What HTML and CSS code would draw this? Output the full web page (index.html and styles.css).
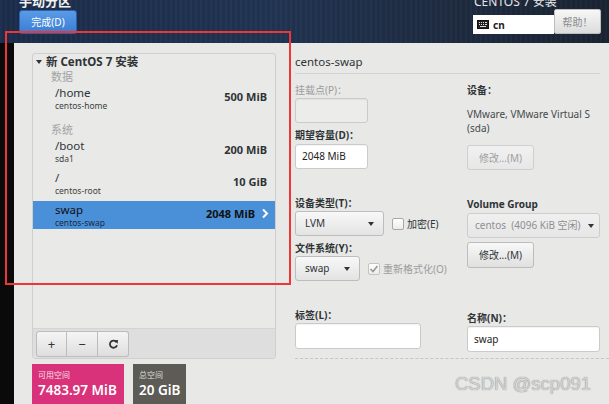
FILE: index.html
```html
<!DOCTYPE html>
<html lang="zh-CN">
<head>
    <meta charset="UTF-8">
    <title>手动分区 - CentOS 7 安装</title>
    <link rel="stylesheet" href="styles.css">
</head>
<body>
<div class="screen">
    <header class="topbar">
        <div class="top-left">
            <h1>手动分区</h1>
            <button class="done-btn">完成(D)</button>
        </div>
        <div class="top-right">
            <div class="product">CENTOS 7 安装</div>
            <div class="top-tools">
                <div class="kbd-field">
                    <svg width="12" height="9" viewBox="0 0 12 9">
                        <rect x="0.5" y="0.5" width="11" height="8" fill="#222" stroke="#111"/>
                        <path d="M2 2.5h1M4 2.5h1M6 2.5h1M8 2.5h2M2 4.5h1M4 4.5h1M6 4.5h1M8 4.5h2M3 6.5h6" stroke="#ddd" stroke-width="1"/>
                    </svg>
                    <span>cn</span>
                </div>
                <button class="help-btn">帮助！</button>
            </div>
        </div>
    </header>

    <div class="main">
        <div class="edge"></div>

        <!-- mount point list -->
        <section class="left-pane">
            <div class="tree-box">
                <div class="tree">
                    <div class="tree-title"><span class="expander"></span>新 CentOS 7 安装</div>
                    <div class="group first">数据</div>
                    <div class="row">
                        <div class="row-text">
                            <div class="mount">/home</div>
                            <div class="device">centos-home</div>
                        </div>
                        <div class="size">500 MiB</div>
                    </div>
                    <div class="group">系统</div>
                    <div class="row">
                        <div class="row-text">
                            <div class="mount">/boot</div>
                            <div class="device">sda1</div>
                        </div>
                        <div class="size">200 MiB</div>
                    </div>
                    <div class="row">
                        <div class="row-text">
                            <div class="mount">/</div>
                            <div class="device">centos-root</div>
                        </div>
                        <div class="size">10 GiB</div>
                    </div>
                    <div class="row selected">
                        <div class="row-text">
                            <div class="mount">swap</div>
                            <div class="device">centos-swap</div>
                        </div>
                        <div class="size">2048 MiB</div>
                        <svg class="chevron" width="8" height="11" viewBox="0 0 8 11">
                            <polyline points="2,1.5 6,5.5 2,9.5" fill="none" stroke="#fff" stroke-width="2"/>
                        </svg>
                    </div>
                </div>
                <div class="toolbar">
                    <button class="tool-btn">+</button>
                    <button class="tool-btn">&minus;</button>
                    <button class="tool-btn">
                        <svg width="11" height="11" viewBox="0 0 11 11">
                            <path d="M8.6 3.2A3.6 3.6 0 1 0 9 6.2" fill="none" stroke="#333" stroke-width="1.8"/>
                            <polygon points="6.2,1.2 10,1 9.6,4.8" fill="#333"/>
                        </svg>
                    </button>
                </div>
            </div>
            <div class="stats">
                <div class="stat free">
                    <div class="stat-label">可用空间</div>
                    <div class="stat-value">7483.97 MiB</div>
                </div>
                <div class="stat total">
                    <div class="stat-label">总空间</div>
                    <div class="stat-value">20 GiB</div>
                </div>
            </div>
        </section>

        <!-- selected device details -->
        <section class="right-pane">
            <div class="detail-title">centos-swap</div>
            <div class="detail-cols">
                <div class="col col-left">
                    <div class="label disabled mt-first">挂载点(P)：</div>
                    <div class="entry disabled w73"></div>
                    <div class="label mt-5">期望容量(D)：</div>
                    <div class="entry w73 mt-2">2048 MiB</div>
                    <div class="label mt-28">设备类型(T)：</div>
                    <div class="inline">
                        <div class="combo w89">LVM<span class="arrow"></span></div>
                        <label class="check"><span class="box"></span>加密(E)</label>
                    </div>
                    <div class="label mt-6">文件系统(Y)：</div>
                    <div class="inline">
                        <div class="combo w65">swap<span class="arrow"></span></div>
                        <label class="check disabled"><span class="box checked">
                            <svg width="10" height="10" viewBox="0 0 10 10"><polyline points="1.5,5 4,7.5 8.5,2" fill="none" stroke="#999" stroke-width="1.6"/></svg>
                        </span>重新格式化(O)</label>
                    </div>
                    <div class="label mt-28">标签(L)：</div>
                    <div class="entry w126 tall"></div>
                </div>
                <div class="col col-right">
                    <div class="label mt-first">设备：</div>
                    <div class="device-desc">VMware, VMware Virtual S<br>(sda)</div>
                    <button class="btn disabled mt-10">修改...(M)</button>
                    <div class="label mt-27">Volume Group</div>
                    <div class="combo disabled full mt-2">centos&nbsp;&nbsp;(4096 KiB 空闲)<span class="arrow"></span></div>
                    <button class="btn tall mt-4">修改...(M)</button>
                    <div class="label mt-44">名称(N)：</div>
                    <div class="entry full tall">swap</div>
                </div>
            </div>
            <div class="dashed"></div>
        </section>
    </div>

    <div class="annotation"></div>
    <div class="watermark">CSDN @scp091</div>
</div>
</body>
</html>
```

FILE: styles.css
```css
* {
    margin: 0;
    padding: 0;
    box-sizing: border-box;
}

body {
    font-family: 'Noto Sans', 'Noto Sans CJK SC', sans-serif;
    background-color: #e8e8e7;
    color: #2e3436;
}

.screen {
    position: relative;
    width: 609px;
    height: 404px;
    overflow: hidden;
}

button {
    font-family: inherit;
}

/* top bar */
.topbar {
    height: 43px;
    display: flex;
    justify-content: space-between;
    background:
        repeating-linear-gradient(90deg, rgba(255,255,255,0.02) 0 2px, rgba(0,0,0,0.03) 2px 5px),
        linear-gradient(90deg, #1b2d4c 0%, #213452 45%, #1e2b40 75%, #1a2433 100%);
    color: #fff;
}

.top-left {
    padding-left: 19px;
}

.top-left h1 {
    margin-top: -7px;
    font-size: 13px;
    line-height: 16px;
    font-weight: bold;
    color: #f2f2f2;
}

.done-btn {
    width: 58px;
    height: 24px;
    border: 1px solid #2a63ad;
    border-radius: 3px;
    background: linear-gradient(#5a9be6, #3a7ed3);
    color: #fff;
    font-size: 10px;
}

.top-right {
    width: 132px;
    margin-right: 4px;
}

.product {
    margin-top: -6px;
    height: 15px;
    line-height: 15px;
    font-size: 12px;
    color: #e6e6e6;
    padding-left: 1px;
    white-space: nowrap;
}

.top-tools {
    display: flex;
    align-items: flex-end;
}

.kbd-field {
    width: 81px;
    height: 19px;
    background: #fff;
    color: #222;
    display: flex;
    align-items: center;
    gap: 4px;
    padding-left: 4px;
    font-size: 10px;
    font-weight: bold;
}

.help-btn {
    width: 47px;
    height: 25px;
    border: 1px solid #bdbdbd;
    border-radius: 2px;
    background: linear-gradient(#f7f7f7, #dcdcdc);
    color: #8a8a8a;
    font-size: 10px;
}

/* main area */
.main {
    display: flex;
    height: 361px;
}

.edge {
    width: 14px;
    background: #0a0a0a;
}

.left-pane {
    width: 271px;
    padding: 10px 9px 0 18px;
}

.tree-box {
    height: 306px;
    border: 1px solid #cfcfce;
    border-radius: 3px;
    display: flex;
    flex-direction: column;
    background: #e9e9e8;
}

.tree {
    flex: 1;
}

.tree-title {
    height: 16px;
    line-height: 16px;
    padding-left: 3px;
    font-size: 11.5px;
    font-weight: bold;
    color: #2e3436;
    display: flex;
    align-items: center;
}

.expander {
    width: 0;
    height: 0;
    border-left: 3.5px solid transparent;
    border-right: 3.5px solid transparent;
    border-top: 4px solid #333;
    margin-right: 4px;
}

.group {
    padding-left: 18px;
    padding-top: 7px;
    line-height: 14px;
    font-size: 11px;
    color: #a3a3a3;
}

.group.first {
    padding-top: 0;
}

.row {
    height: 28px;
    margin-bottom: 4px;
    display: flex;
    align-items: center;
    padding: 0 8px 3px 22px;
}

.row-text {
    flex: 1;
    padding-top: 2px;
    align-self: flex-start;
}

.mount {
    font-size: 11.5px;
    line-height: 14px;
    color: #2e3436;
}

.device {
    font-size: 8.5px;
    line-height: 11px;
    color: #3a3f40;
}

.size {
    font-size: 11px;
    font-weight: bold;
    color: #2e3436;
}

.row.selected {
    background: #4a90d9;
    padding-right: 6px;
}

.row.selected .mount,
.row.selected .size {
    color: #111;
}

.row.selected .device {
    color: #1c2a44;
}

.chevron {
    margin-left: 6px;
}

.toolbar {
    height: 30px;
    border-top: 1px solid #d4d4d4;
    background: #dedede;
    padding: 2px 3px;
    display: flex;
}

.tool-btn {
    width: 31px;
    height: 26px;
    border: 1px solid #bcbcbc;
    background: linear-gradient(#f5f5f5, #dedede);
    font-size: 13px;
    color: #333;
    display: flex;
    align-items: center;
    justify-content: center;
}

.tool-btn:first-child {
    border-radius: 3px 0 0 3px;
}

.tool-btn + .tool-btn {
    border-left: none;
}

.tool-btn:last-child {
    border-radius: 0 3px 3px 0;
}

.stats {
    display: flex;
    gap: 9px;
    margin-top: 5px;
}

.stat {
    height: 42px;
    padding: 5px 6px 0;
    color: #fff;
    white-space: nowrap;
}

.stat.free {
    width: 92px;
    background: #d9327a;
}

.stat.total {
    width: 53px;
    background: #5c5b55;
}

.stat-label {
    font-size: 8px;
    line-height: 12px;
    color: #f2e0e8;
}

.stat.total .stat-label {
    color: #dcdcd8;
}

.stat-value {
    font-size: 13.5px;
    line-height: 18px;
    font-weight: 600;
}

/* right pane */
.right-pane {
    flex: 1;
    padding: 0 9px 0 10px;
}

.detail-title {
    padding-top: 11px;
    padding-bottom: 3px;
    line-height: 16px;
    font-size: 11.5px;
    color: #2e3436;
    border-bottom: 1px solid #d3d3d2;
}

.detail-cols {
    display: flex;
}

.col {
    display: flex;
    flex-direction: column;
    align-items: flex-start;
}

.col-left {
    width: 172px;
}

.col-right {
    width: 133px;
}

.label {
    font-size: 10px;
    line-height: 14px;
    font-weight: bold;
    color: #2e3436;
    margin-bottom: 1px;
}

.label.disabled {
    font-weight: normal;
    color: #9c9c9c;
}

.mt-first { margin-top: 9px; }
.mt-2 { margin-top: 1px; }
.mt-4 { margin-top: 4px; }
.mt-5 { margin-top: 5px; }
.mt-6 { margin-top: 5px; }
.mt-10 { margin-top: 10px; }
.mt-27 { margin-top: 27px; }
.mt-28 { margin-top: 27px; }
.mt-44 { margin-top: 43px; }

.entry {
    height: 25px;
    border: 1px solid #cbcbcb;
    border-radius: 3px;
    background: #fff;
    font-size: 10px;
    line-height: 23px;
    padding-left: 6px;
    color: #222;
    box-shadow: inset 0 1px 1px rgba(0,0,0,0.05);
}

.entry.disabled {
    background: #ececeb;
}

.entry.tall,
.btn.tall {
    height: 26px;
    line-height: 24px;
}

.w73 { width: 73px; }
.w89 { width: 89px; }
.w65 { width: 65px; }
.w126 { width: 126px; }
.full { width: 133px; }

.inline {
    display: flex;
    align-items: center;
}

.combo {
    position: relative;
    height: 25px;
    border: 1px solid #bdbdbd;
    border-radius: 3px;
    background: linear-gradient(#f8f8f8, #e3e3e3);
    font-size: 10px;
    line-height: 23px;
    padding-left: 9px;
    color: #2e3436;
}

.combo.disabled {
    color: #8f8f8f;
    background: linear-gradient(#f0f0f0, #e6e6e6);
    border-color: #cdcdcd;
    padding-left: 7px;
}

.arrow {
    position: absolute;
    right: 9px;
    top: 10px;
    border-left: 3.5px solid transparent;
    border-right: 3.5px solid transparent;
    border-top: 4px solid #333;
}

.combo.disabled .arrow {
    right: 5px;
}

.check {
    display: flex;
    align-items: center;
    margin-left: 8px;
    font-size: 10px;
    color: #2e3436;
}

.box {
    width: 12px;
    height: 12px;
    border: 1px solid #a8a8a8;
    border-radius: 2px;
    background: linear-gradient(#fff, #ececec);
    margin-right: 3px;
    display: flex;
    align-items: center;
    justify-content: center;
}

.check.disabled {
    color: #9c9c9c;
}

.check.disabled .box {
    border-color: #c4c4c4;
}

.device-desc {
    margin-top: 9px;
    font-size: 10px;
    line-height: 14px;
    color: #454a4b;
}

.btn {
    width: 67px;
    height: 25px;
    border: 1px solid #bdbdbd;
    border-radius: 3px;
    background: linear-gradient(#f8f8f8, #e0e0e0);
    font-size: 10px;
    color: #2e3436;
}

.btn.disabled {
    color: #a0a0a0;
    border-color: #cfcfcf;
    background: linear-gradient(#f1f1f1, #e7e7e7);
}

.dashed {
    margin-top: 6px;
    margin-right: -9px;
    border-top: 1px dashed #c6c6c6;
}

/* overlays */
.annotation {
    position: absolute;
    left: 5px;
    top: 31px;
    width: 286px;
    height: 254px;
    border: 2px solid #ee3636;
}

.watermark {
    position: absolute;
    left: 455px;
    top: 373px;
    font-family: 'Liberation Sans', Arial, sans-serif;
    font-size: 18.5px;
    color: #d4d4d4;
    text-shadow: 0 0 1px #6f6f6f;
}
```
